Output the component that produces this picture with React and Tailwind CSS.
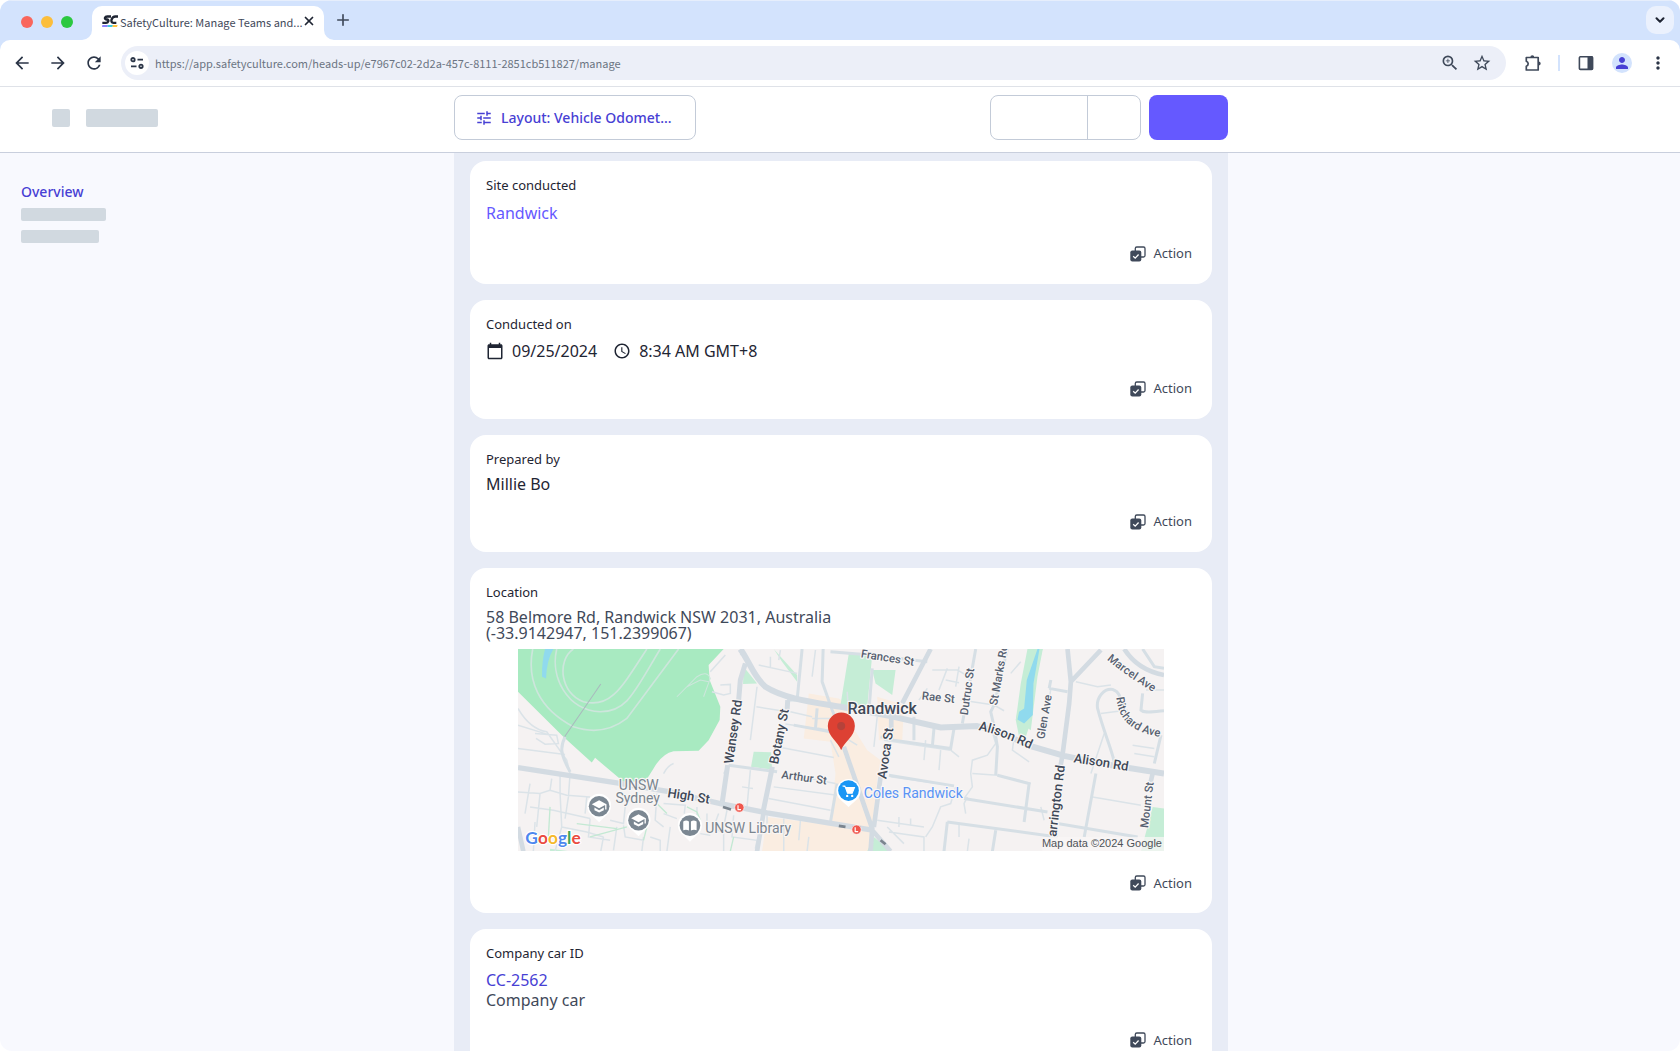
import { ChevronDown, Plus, X } from "lucide-react";
import { MdAccessTime, MdArrowBack, MdArrowForward, MdCalendarToday, MdMoreVert, MdPerson, MdRefresh, MdStarOutline, MdTune, MdZoomIn } from "react-icons/md";

const CHROME_FONT = "font-['Noto_Sans_CJK_SC','Noto_Sans',sans-serif]";

function Logo() {
  return (
    <svg viewBox="0 0 48 36" className="h-3 w-4 shrink-0" aria-hidden="true">
      <g fill="none" stroke="#1f2533" strokeWidth="7">
        <path d="M27 4.500H16C8 4.500 6 12.500 13 13.500H16C22 14.500 19 23.500 12 23.500H1" />
        <path d="M48 4.500H40C29 4.500 23 23.500 34 23.500H43" />
      </g>
      <path d="M1 31H18L16 35H0z" fill="#6559ff" />
      <path d="M18 31H33L31 35H16z" fill="#00b8d4" />
      <path d="M33 31H47L45 35H31z" fill="#ffb000" />
    </svg>
  );
}

function SiteSettingsIcon() {
  return (
    <svg viewBox="0 0 14 12" className="h-3 w-3.5" fill="none" stroke="#2b3547" strokeWidth="1.8" aria-hidden="true">
      <circle cx="3" cy="2.700" r="1.700" />
      <path d="M7.500 2.700H13M1 9.300H6.500" />
      <circle cx="11" cy="9.300" r="1.700" />
    </svg>
  );
}

function PuzzleIcon() {
  return (
    <svg viewBox="0 0 18 18" className="size-[18px]" aria-hidden="true">
      <path d="M2.300 3.500H14.200V16H2.300V12.300C4.800 11.500 4.800 8 2.300 7.200z" fill="none" stroke="#3f495a" strokeWidth="1.700" strokeLinejoin="round" />
      <path d="M6.300 3.500a2 2.300 0 0 1 4 0zM14.500 7.600a2.200 2 0 0 1 0 4z" fill="#3f495a" />
    </svg>
  );
}

function SidePanelIcon() {
  return (
    <svg viewBox="0 0 16 16" className="size-4" aria-hidden="true">
      <rect x="1.400" y="1.800" width="13.200" height="12.600" rx="1" fill="none" stroke="#3f495a" strokeWidth="1.600" />
      <path d="M9.500 1.500H15V14.500H9.500z" fill="#3f495a" />
    </svg>
  );
}

function ActionIcon() {
  return (
    <svg viewBox="0 0 16 16" className="size-4" aria-hidden="true">
      <path d="M5.300 5V2.500a1.500 1.500 0 0 1 1.500-1.500H13.500A1.500 1.500 0 0 1 15 2.500V9.500A1.500 1.500 0 0 1 13.500 11H11" fill="none" stroke="#3f495a" strokeWidth="1.300" />
      <rect x="0.300" y="4.600" width="11" height="11" rx="2" fill="#3f495a" />
      <path d="M3.200 10.200L5.200 12.100L8.600 8.500" fill="none" stroke="#fff" strokeWidth="1.300" />
    </svg>
  );
}

function TabStrip() {
  return (
    <div className="flex h-10 shrink-0 items-end border-t border-[#e6eefc] bg-[#d3e3fd] pl-[21px] pr-1.5">
      <div className="flex gap-2 self-center pt-0.5">
        <span className="size-3 rounded-full bg-[#f9665c]" />
        <span className="size-3 rounded-full bg-[#fcbe3b]" />
        <span className="size-3 rounded-full bg-[#2bc840]" />
      </div>
      <div className="ml-[3px] flex items-end">
        <svg viewBox="0 0 10 10" className="ml-1.5 size-2.5" aria-hidden="true"><path d="M10 0V10H0A10 10 0 0 0 10 0z" fill="#fff" /></svg>
        <div className="flex h-[34px] w-[232px] items-center rounded-t-[10px] bg-white pb-1 pl-2.5 pr-2">
          <Logo />
          <span className="ml-0.5 min-w-0 flex-1 whitespace-nowrap pt-px text-[11px] leading-4 text-[#3f495a]">SafetyCulture: Manage Teams and...</span>
          <button aria-label="Close tab" className="text-[#1f2533]"><X size={14} strokeWidth={3} /></button>
        </div>
        <svg viewBox="0 0 10 10" className="size-2.5" aria-hidden="true"><path d="M0 0V10H10A10 10 0 0 1 0 0z" fill="#fff" /></svg>
      </div>
      <button aria-label="New tab" className="mb-[11px] text-[#3f495a]"><Plus size={18} strokeWidth={2.2} /></button>
      <button aria-label="Search tabs" className="mb-1.5 ml-auto grid size-7 place-items-center rounded-[10px] bg-[#ebf1fd] text-[#1f2533]">
        <ChevronDown size={14} strokeWidth={3.5} />
      </button>
    </div>
  );
}

function AddressBar() {
  return (
    <div className="flex h-[47px] shrink-0 items-center border-b border-[#dfe2e8] bg-white pl-3 pr-3 text-[#2b3547]">
      <button aria-label="Back"><MdArrowBack size={20} /></button>
      <button aria-label="Forward" className="ml-4"><MdArrowForward size={20} /></button>
      <button aria-label="Reload" className="ml-4"><MdRefresh size={20} /></button>
      <div className="ml-[17px] flex h-[34px] flex-1 items-center rounded-full bg-[#eceff8] pl-1 pr-3.5">
        <button aria-label="Site information" className="grid size-6 place-items-center rounded-full bg-white"><SiteSettingsIcon /></button>
        <input
          aria-label="Address"
          readOnly
          value="https://app.safetyculture.com/heads-up/e7967c02-2d2a-457c-8111-2851cb511827/manage"
          className="ml-1.5 h-6 flex-1 bg-transparent text-[11px] text-[#6b7482] outline-none"
        />
        <button aria-label="Zoom" className="text-[#3f495a]"><MdZoomIn size={20} /></button>
        <button aria-label="Bookmark" className="ml-3 text-[#3f495a]"><MdStarOutline size={20} /></button>
      </div>
      <button aria-label="Extensions" className="ml-[18px]"><PuzzleIcon /></button>
      <span className="ml-4 h-4 w-0.5 bg-[#d3e3fd]" />
      <button aria-label="Side panel" className="ml-[18px]"><SidePanelIcon /></button>
      <button aria-label="Profile" className="ml-[18px] grid size-5 place-items-center rounded-full bg-[#d3e3fd] text-[#4740d4]"><MdPerson size={18} /></button>
      <button aria-label="Browser menu" className="ml-4"><MdMoreVert size={20} /></button>
    </div>
  );
}

function PageHeader() {
  return (
    <header className="grid h-[66px] shrink-0 grid-cols-[454fr_774fr_452fr] items-center border-b border-[#c9cfdd] bg-white pb-1">
      <div className="flex gap-4 pl-[52px]">
        <span className="size-[18px] rounded-[2px] bg-[#d1d9e0]" />
        <span className="h-[18px] w-[72px] rounded-[2px] bg-[#d1d9e0]" />
      </div>
      <div className="flex items-center gap-2">
        <button className="mr-auto flex h-[45px] items-center gap-2 rounded-lg border border-[#c3cbd8] bg-white pl-5 pr-[23px] text-[14px] font-medium text-[#4740d4]">
          <MdTune size={18} />
          Layout: Vehicle Odomet...
        </button>
        <div className="flex h-[45px] w-[151px] divide-x divide-[#c3cbd8] rounded-lg border border-[#c3cbd8]">
          <button aria-label="Export" className="w-[97px]" />
          <button aria-label="More options" className="flex-1" />
        </div>
        <button aria-label="Done" className="h-[45px] w-[79px] rounded-lg bg-[#6559ff]" />
      </div>
      <div />
    </header>
  );
}

function Card({ label, gap, children }) {
  return (
    <section className="rounded-2xl bg-white px-4 pb-5 pt-3.5">
      <h2 className="text-[13px] leading-5 text-[#1f2533]">{label}</h2>
      {children}
      <div className={"flex justify-end pr-1 " + gap}>
        <button className="flex h-5 items-center gap-2 text-[13px] text-[#3f495a]">
          <ActionIcon />
          Action
        </button>
      </div>
    </section>
  );
}

const MINOR_ROADS = [
  "M24 205C50 250 80 270 110 275L170 360L180 400M75 280L140 285L145 310L105 312L78 295M24 255L120 285M24 325L165 343",
  "M150 405V460M180 400L175 470M125 415L120 450L90 460L24 455M60 430L45 520M90 460L80 560M120 450L170 465L240 470M150 460L155 560L135 633M60 500L130 510L240 535M75 545L70 633M155 560L230 575L280 590M175 470L165 535M230 470L225 520",
  "M240 535L235 590L300 600M300 540L340 550L345 500M280 590L272 633M320 560L310 630M340 555L345 590L400 600M400 590L395 633M440 460L435 540L460 560M460 490L525 495L522 520M460 520L500 535M480 560L470 633M560 500V545M590 520V545M420 590L450 600V633M570 580L600 585",
  "M460 400C468 385 475 375 490 370M600 95L645 45M630 135L660 133V160L640 165L605 155M700 30L690 45",
  "M745 75L860 100M740 140L720 300M738 200L832 215M780 50V85M810 30L805 60M915 30L905 110M800 320L970 352M840 215L905 230M825 252L915 265M905 235L960 235",
  "M655 375L640 400M720 390L710 500M695 440L728 445M820 400L975 430M790 440L980 465M775 475L960 510M770 525V550M625 520L610 560L640 580V633M650 510L640 560M820 535V633M670 525L665 590L740 600L735 625M870 540L865 600M895 590L890 633",
  "M960 300L985 350M1010 155L1015 230M1100 230L1090 320M1000 290L1040 315",
  "M1250 145L1225 180M1265 90H1340L1375 110M1310 85L1285 150M1305 120L1345 128M1345 80L1335 140M1350 180L1450 195L1480 212",
  "M1120 300L1320 330M1245 300L1240 360M1290 330L1285 390M1140 410L1330 437M1110 450L1135 455",
  "M1440 260L1455 310L1430 345L1385 360L1380 400L1385 440L1360 475M1385 400L1460 405L1560 430M1320 330L1345 350M1510 290L1505 330L1555 365M1335 440L1320 490L1290 500L1265 560L1245 590",
  "M1100 540L1240 560M1130 560L1180 610M1165 530V560M1200 535V555M1135 575L1240 590V633M1375 595L1370 633M1345 550V590M1370 470L1360 490L1365 520",
  "M1695 125L1760 140L1800 135M1770 220L1850 210M1870 340L1930 350M1780 280L1740 400M1745 470L1890 495M1865 315L1930 325M1620 145L1615 180M1905 150H1960M1530 65L1500 100M1590 500L1600 540",
];

const MID_ROADS = [
  "M875 27L860 180L830 180M938 27L935 125L965 210L985 260M920 205L915 265L965 275M850 255L960 275",
  "M165 290C150 320 150 340 180 395M655 375L800 395M980 430L960 545M1085 85L1075 215",
  "M960 35L1080 45L1250 65M1395 27L1355 250M1490 27L1450 195L1440 215L1450 260L1460 320L1455 405",
  "M1210 230V300M1270 265L1265 320M1330 265L1320 325L1150 300L1110 290",
  "M1135 405L1330 437M1360 475L1610 515M1310 545L1640 590M1460 405L1555 430L1540 545M1310 545L1300 633M1455 570L1445 633M1640 550L1880 590",
  "M1615 145L1670 155M1620 120L1615 145M1810 365C1800 320 1780 280 1760 205C1755 170 1780 145 1805 148C1825 155 1830 170 1830 200M1895 160L1890 210C1900 220 1920 215 1959 212M1950 285L1930 370M1755 400L1720 590M1895 27L1930 80L1959 85",
];

const HALO = { stroke: "#f8f6f5", strokeWidth: 7, paintOrder: "stroke", strokeLinejoin: "round" };
const DARK_TEXT = { ...HALO, fill: "#566070" };
const GREY_TEXT = { ...HALO, fill: "#7b858f" };
const HEAVY_TEXT = { ...HALO, fill: "#3f4857" };

function CampusPin({ x, y, library }) {
  return (
    <g transform={"translate(" + x + " " + y + ")"}>
      <path d="M0 48L-22 27A36 36 0 1 1 22 27z" fill="#fff" />
      <circle r="31" fill="#7b8792" />
      {library ? (
        <path d="M-3 -12Q-11 -18 -20 -12V14Q-11 10 -3 15zM3 -12Q11 -18 20 -12V14Q11 10 3 15z" fill="#fff" />
      ) : (
        <path d="M0 -18L-22 -6L0 6L18 -4V10H22V-6zM-14 4V12L0 19L14 12V4L0 12z" fill="#fff" />
      )}
    </g>
  );
}

function LocationMap() {
  return (
    <svg viewBox="24 27 1935 606" className="w-full font-['Roboto',sans-serif]" role="img" aria-label="Map of Randwick">
      <defs>
        <path id="alison-west" d="M1403 270C1450 278 1500 300 1580 336" />
        <path id="ritchard" d="M1816 172C1822 225 1845 285 1985 294" />
        <path id="marcel" d="M1788 58Q1840 105 1950 170" />
      </defs>
      <rect x="24" y="27" width="1935" height="606" fill="#f5f2f2" />
      <path d="M895 160L985 175L1010 195L1020 250L1070 330L1110 360L1100 420L1085 560H1000L960 540L975 400L960 305L880 295zM1100 170L1180 195L1175 300L1105 300zM770 530L1085 570L1080 633H755z" fill="#faede1" />
      <path d="M24 27H640L595 75L598 120L630 200L628 240L595 300L565 332L490 333Q455 340 430 385L405 425H340L255 353L245 367L160 290L24 155z" fill="#a8eac1" />
      <path d="M700 80L740 130L698 132zM730 335L782 336L785 388L722 380zM1015 40L1085 45L1070 200L990 195zM1085 90L1155 90L1145 165L1095 130zM1560 27H1596L1580 110L1560 270L1515 240zM1925 500L1959 505V633H1890zM1090 590L1140 633H1070zM790 27L860 105V125L815 65zM120 625L180 633H120z" fill="#c5edd6" />
      <path d="M1550 27H1595L1575 120L1560 245L1545 290H1525L1515 240L1530 130z" fill="#c5edd6" />
      <path d="M1580 27H1586L1568 130L1566 225L1540 250L1520 238L1525 215L1540 205L1548 120z" fill="#90daee" />
      <path d="M105 27H130Q110 60 108 115L96 110Q95 65 105 27z" fill="#90daee" />
      <g fill="none" stroke="#cde6dc" strokeWidth="5">
        <path d="M68 27C50 120 85 205 190 260Q280 290 350 235L505 27" />
        <path d="M140 27C120 110 170 210 270 215C350 215 370 160 450 27" />
        <path d="M190 27C140 60 150 160 220 185C300 205 330 150 410 27" />
        <path d="M500 170L560 110Q590 90 600 115L580 170M530 140L570 120L595 125" strokeWidth="3" />
      </g>
      <path d="M272 132L160 295" stroke="#a9b8bd" strokeWidth="3" />
      <g fill="none" stroke="#dbe3e8" strokeWidth="4.500">
        {MINOR_ROADS.map((d) => <path key={d} d={d} />)}
      </g>
      <g fill="none" stroke="#d6dfe5" strokeWidth="9">
        {MID_ROADS.map((d) => <path key={d} d={d} />)}
      </g>
      <g fill="none" stroke="#c3e9d3" strokeWidth="4">
        <path d="M200 550L320 565M240 590L350 560M120 500L115 590M430 460L440 490L470 520M530 500L560 515L570 540M410 560L400 600M670 590L660 633" />
      </g>
      <g fill="none" stroke="#d3dbe2">
        <path d="M24 382L320 428L480 455L630 490L770 518L985 553L1090 570" strokeWidth="16" />
        <path d="M690 27C720 70 730 110 765 140C820 175 900 185 990 200L1140 228L1290 262L1400 258Q1450 265 1550 315L1660 347L1770 370L1959 400" strokeWidth="18" />
        <path d="M705 70L690 120L685 180M652 375L636 485M832 180L830 210M786 380L758 515" strokeWidth="15" />
        <path d="M1260 27L1175 190M1142 235V270M1110 410L1090 560M1000 320L1085 565L1080 633M1085 570L1140 633" strokeWidth="14" />
        <path d="M1770 30L1680 125L1675 190L1655 345L1645 400M1670 27L1680 125M1925 400L1918 430M1840 27Q1880 90 1959 105M24 560L40 633M760 515L740 633" strokeWidth="14" />
      </g>
      <path d="M638 500L662 508M985 557L1005 560M1110 600L1125 612" stroke="#7b858f" strokeWidth="8" />

      <g fontWeight="500" fontSize="34" style={DARK_TEXT}>
        <text x="812" y="414" transform="rotate(8 812 414)">Arthur St</text>
        <text x="1050" y="52" transform="rotate(9 1050 52)">Frances St</text>
        <text x="1233" y="178" transform="rotate(6 1233 178)">Rae St</text>
        <text x="1371" y="226" transform="rotate(-82 1371 226)">Dutruc St</text>
        <text x="1459" y="197" transform="rotate(-80 1459 197)">St Marks Rd</text>
        <text x="1600" y="298" transform="rotate(-80 1600 298)">Glen Ave</text>
        <text x="1911" y="564" transform="rotate(-83 1911 564)">Mount St</text>
        <text><textPath href="#marcel">Marcel Ave</textPath></text>
        <text><textPath href="#ritchard">Ritchard Ave</textPath></text>
      </g>
      <g fontWeight="500" fontSize="39" style={HEAVY_TEXT}>
        <text x="668" y="372" transform="rotate(-82 668 372)">Wansey Rd</text>
        <text x="803" y="374" transform="rotate(-79 803 374)">Botany St</text>
        <text x="1127" y="417" transform="rotate(-82 1127 417)">Avoca St</text>
        <text x="1636" y="590" transform="rotate(-83 1636 590)">arrington Rd</text>
        <text x="470" y="470" transform="rotate(9 470 470)">High St</text>
        <text x="1687" y="366" transform="rotate(9 1687 366)">Alison Rd</text>
        <text><textPath href="#alison-west">Alison Rd</textPath></text>
        <text x="1011" y="221" fontSize="48">Randwick</text>
      </g>
      <g fontSize="42" style={GREY_TEXT}>
        <text x="326" y="448">UNSW</text>
        <text x="316" y="489">Sydney</text>
        <text x="585" y="577">UNSW Library</text>
      </g>
      <text x="1060" y="472" fontSize="42" style={{ ...HALO, fill: "#5a93f5" }}>Coles Randwick</text>

      <CampusPin x={267} y={498} />
      <CampusPin x={385} y={540} />
      <CampusPin x={539} y={556} library />

      <path d="M1014 500L989 478A36 36 0 1 1 1039 478z" fill="#fff" />
      <circle cx="1014" cy="451" r="31" fill="#1a96f5" />
      <path d="M996 437H1003L1011 459H1025L1032 442H1005" fill="#fff" stroke="#fff" strokeWidth="3" />
      <circle cx="1010" cy="467" r="3.500" fill="#fff" />
      <circle cx="1025" cy="467" r="3.500" fill="#fff" />

      {[[687, 502], [1038, 568]].map(([x, y]) => (
        <g key={x}>
          <circle cx={x} cy={y} r="14" fill="#f0574d" stroke="#fff" strokeWidth="2" />
          <path d={"M" + (x - 4) + " " + (y - 7) + "v13h9"} fill="none" stroke="#fff" strokeWidth="3.500" />
        </g>
      ))}

      <path d="M992 330C984 306 952 290 952 258A40 40 0 0 1 1033 258C1033 290 1000 306 992 330z" fill="#dd4133" />
      <circle cx="992" cy="258" r="12" fill="#b5423a" />

      <text x="46" y="611" fontSize="52" fontWeight="700" stroke="#fff" strokeWidth="7" paintOrder="stroke" className="font-['Lato',sans-serif]">
        <tspan fill="#4d87ee">G</tspan><tspan fill="#ea4b3f">o</tspan><tspan fill="#f6b92c">o</tspan><tspan fill="#4d87ee">g</tspan><tspan fill="#3fa65a">l</tspan><tspan fill="#ea4b3f">e</tspan>
      </text>
      <rect x="1594" y="590" width="365" height="43" fill="#f8f6f5" opacity="0.750" />
      <text x="1953" y="619" textAnchor="end" fontSize="33" fill="#4f5358" className="font-['Liberation_Sans',sans-serif]">Map data ©2024 Google</text>
    </svg>
  );
}

export default function App() {
  return (
    <div className="flex h-screen flex-col overflow-hidden rounded-xl bg-[#f8f9fe] font-['Noto_Sans',sans-serif]">
      <div className={"shrink-0 " + CHROME_FONT}>
        <TabStrip />
        <div className="bg-[#d3e3fd]">
          <div className="overflow-hidden rounded-t-[10px]"><AddressBar /></div>
        </div>
      </div>
      <PageHeader />
      <div className="grid min-h-0 flex-1 grid-cols-[454fr_774fr_452fr] overflow-hidden">
        <nav className="flex flex-col items-start pl-[21px] pt-[29px]">
          <a href="#overview" className="text-[14px] font-medium leading-5 text-[#4740d4]">Overview</a>
          <span className="mt-1.5 h-[13px] w-[85px] rounded-[2px] bg-[#d1d9e0]" />
          <span className="mt-[9px] h-[13px] w-[78px] rounded-[2px] bg-[#d1d9e0]" />
        </nav>
        <main className="flex min-w-0 flex-col gap-4 bg-[#e8ecf6] px-4 pt-2">
          <Card label="Site conducted" gap="mt-[19px]">
            <a href="#randwick" className="mt-1.5 block text-[16px] leading-6 text-[#6559ff]">Randwick</a>
          </Card>
          <Card label="Conducted on" gap="mt-4">
            <div className="mt-[5px] flex items-center text-[16px] leading-6 text-[#1f2533]">
              <MdCalendarToday size={18} />
              <span className="ml-2">09/25/2024</span>
              <MdAccessTime size={18} className="ml-4" />
              <span className="ml-2">8:34 AM GMT+8</span>
            </div>
          </Card>
          <Card label="Prepared by" gap="mt-4">
            <p className="mt-[3px] text-[16px] leading-6 text-[#1f2533]">Millie Bo</p>
          </Card>
          <Card label="Location" gap="mt-[22px]">
            <p className="mt-[7px] text-[16px] leading-4 text-[#3f495a]">58 Belmore Rd, Randwick NSW 2031, Australia<br />(-33.9142947, 151.2399067)</p>
            <div className="px-8 pt-2"><LocationMap /></div>
          </Card>
          <Card label="Company car ID" gap="mt-5">
            <a href="#cc-2562" className="mt-[7px] block text-[16px] leading-5 text-[#4740d4]">CC-2562</a>
            <p className="text-[16px] leading-5 text-[#3f495a]">Company car</p>
          </Card>
        </main>
        <div />
      </div>
    </div>
  );
}
